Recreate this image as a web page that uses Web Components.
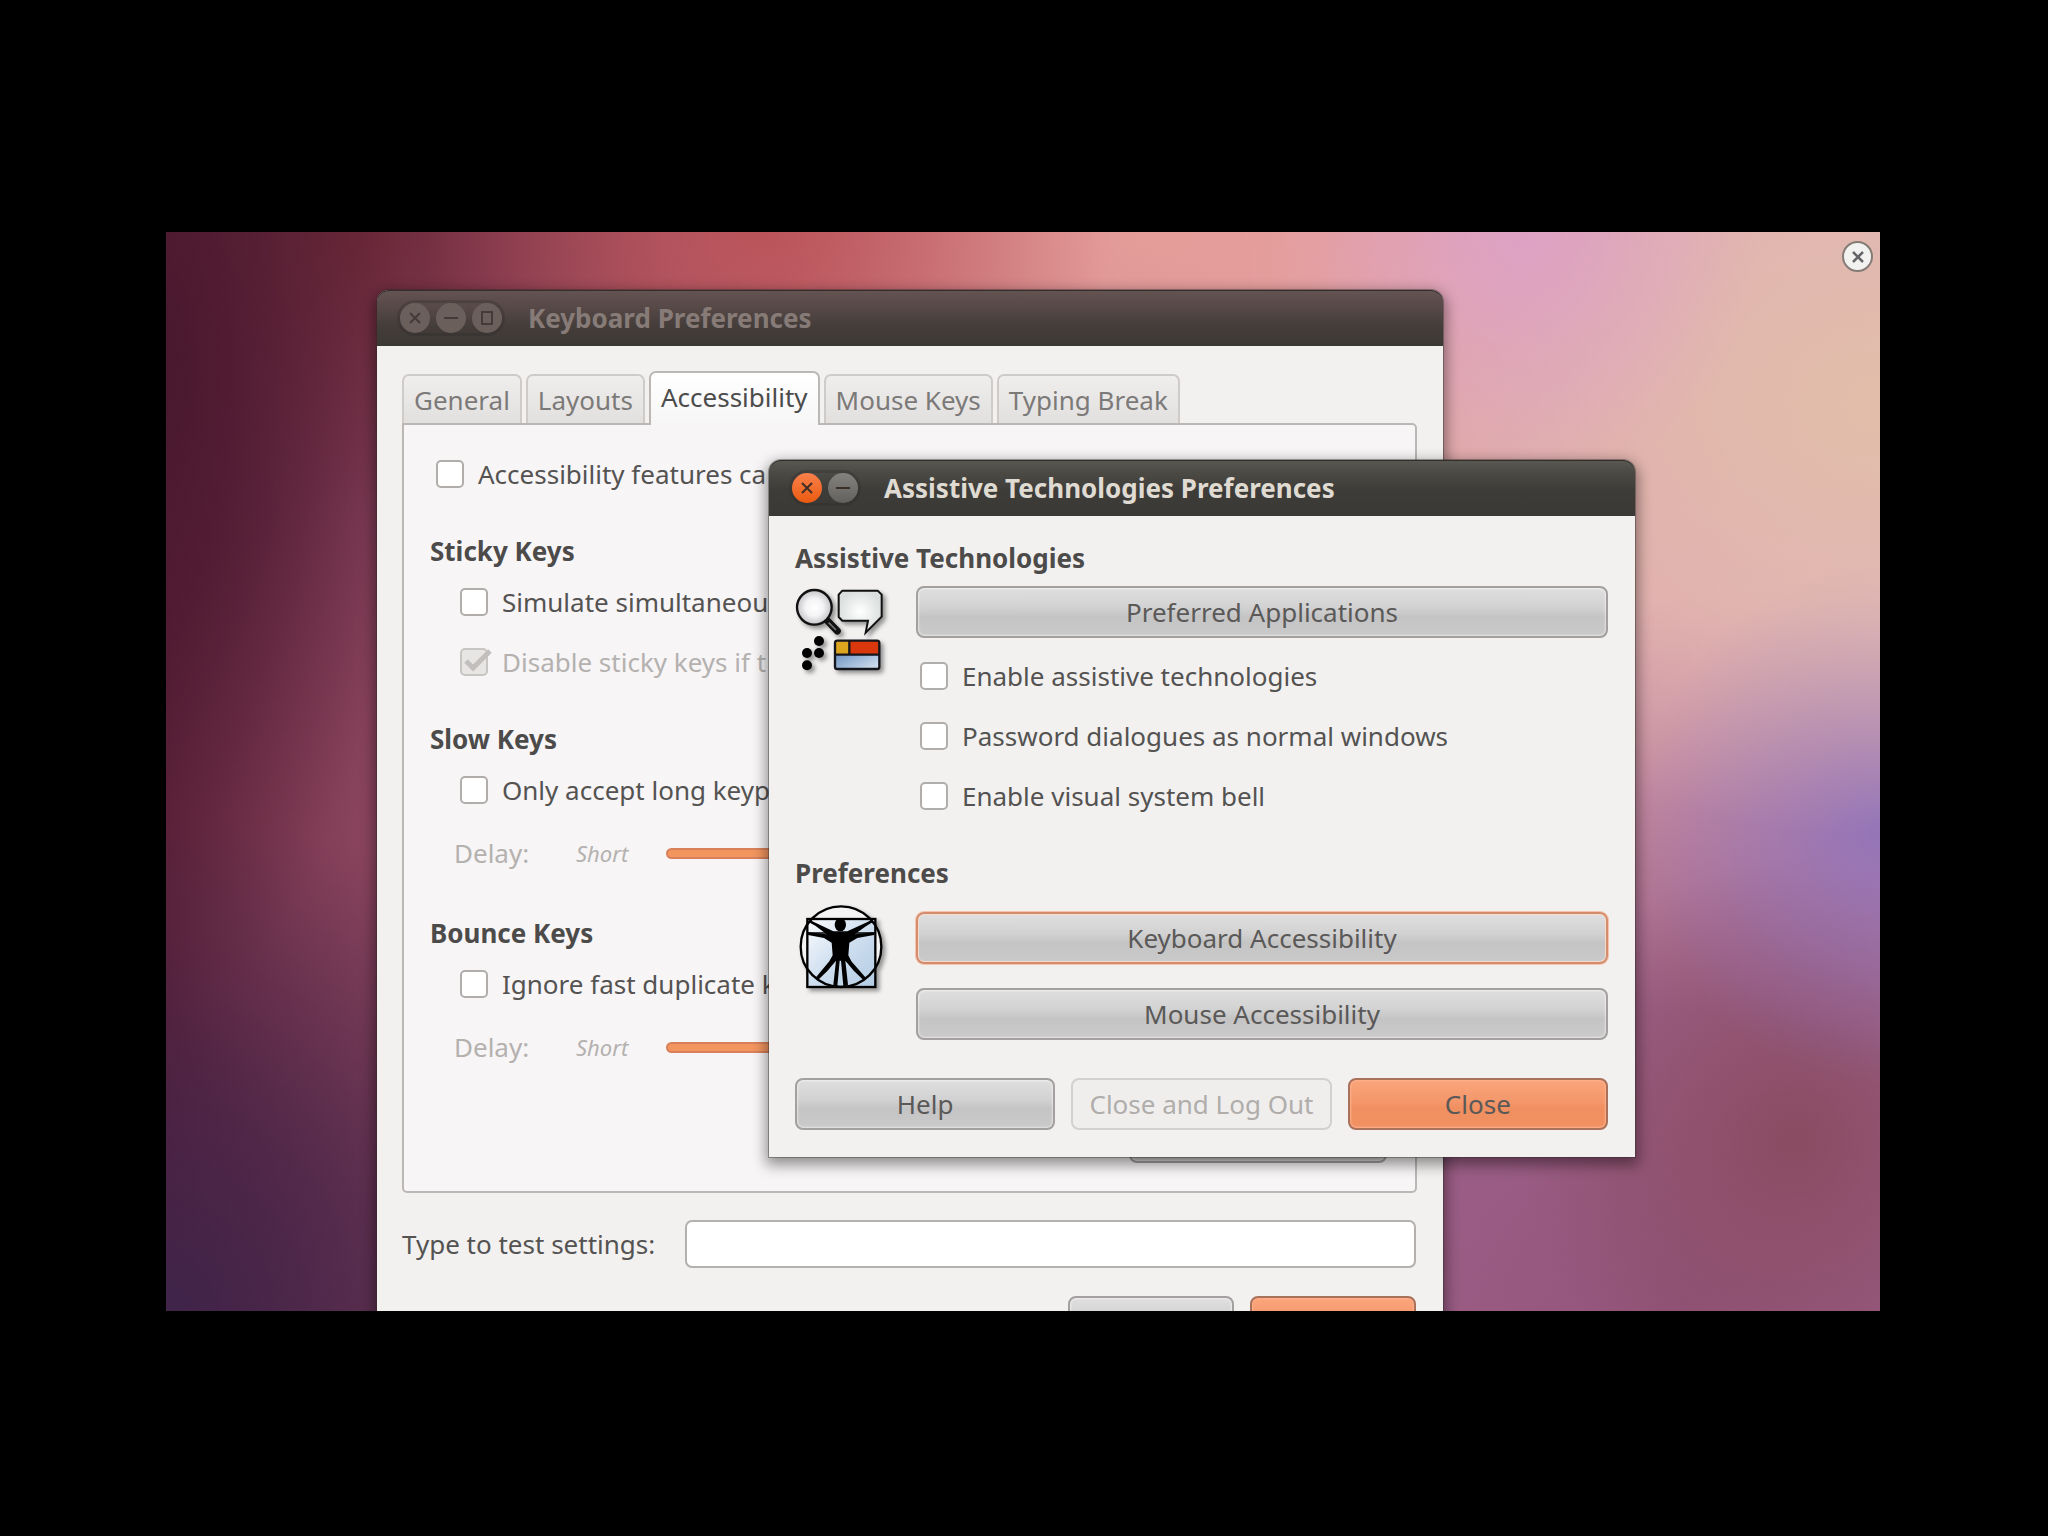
<!DOCTYPE html>
<html lang="en-GB">
<head>
<meta charset="utf-8">
<title>Assistive Technologies Preferences</title>
<style>
  html { height: 100%; background: #000; }
  body {
    margin: 0; min-height: 100%; box-sizing: border-box; display: grid;
    padding: 232px 168px 225px 166px; background: #000; color: #545352;
    font-family: "Noto Sans", "Open Sans", sans-serif; font-size: 26px; line-height: 34px;
  }
  .keyboard { left: 211px; top: 58px; width: 1066px; --side: 25px; }
  .assistive { left: 603px; top: 228px; width: 866px; }
  .push { margin-top: 31px; display: flex; justify-content: flex-end; padding-right: 28px; }
  .push ambiance-button { width: 258px; }
  .test { margin: 27px 1px 28px 0; }
  .end { display: flex; justify-content: flex-end; gap: 16px; margin-right: 1px; }
  .end ambiance-button { width: 166px; }
  .checks { margin: 8px 4px 0; }
  .stack { display: grid; gap: 24px; padding-top: 10px; }
  .footer { display: grid; grid-template-columns: repeat(3, 1fr); gap: 16px; padding-top: 38px; }
</style>
</head>
<body>
<ubuntu-desktop>
  <ambiance-window class="keyboard" heading="Keyboard Preferences" controls="close minimise maximise">
    <tab-book tabs="General,Layouts,Accessibility,Mouse Keys,Typing Break" selected="2">
      <check-option label="Accessibility features ca"></check-option>
      <key-group heading="Sticky Keys">
        <check-option label="Simulate simultaneou"></check-option>
        <check-option label="Disable sticky keys if t" checked disabled></check-option>
      </key-group>
      <key-group heading="Slow Keys">
        <check-option label="Only accept long keyp"></check-option>
        <delay-slider slot="delay"></delay-slider>
      </key-group>
      <key-group heading="Bounce Keys">
        <check-option label="Ignore fast duplicate k"></check-option>
        <delay-slider slot="delay"></delay-slider>
      </key-group>
      <div class="push"><ambiance-button></ambiance-button></div>
    </tab-book>
    <div class="test"><text-entry label="Type to test settings:"></text-entry></div>
    <div class="end"><ambiance-button>Help</ambiance-button><ambiance-button kind="primary">Close</ambiance-button></div>
  </ambiance-window>

  <ambiance-window class="assistive" heading="Assistive Technologies Preferences" controls="close minimise" active>
    <icon-section heading="Assistive Technologies">
      <assistive-icon slot="icon"></assistive-icon>
      <ambiance-button>Preferred Applications</ambiance-button>
      <div class="checks">
        <check-option label="Enable assistive technologies"></check-option>
        <check-option label="Password dialogues as normal windows"></check-option>
        <check-option label="Enable visual system bell"></check-option>
      </div>
    </icon-section>
    <icon-section heading="Preferences" spaced>
      <access-icon slot="icon"></access-icon>
      <div class="stack">
        <ambiance-button kind="focused">Keyboard Accessibility</ambiance-button>
        <ambiance-button>Mouse Accessibility</ambiance-button>
      </div>
    </icon-section>
    <div class="footer">
      <ambiance-button>Help</ambiance-button>
      <ambiance-button kind="off">Close and Log Out</ambiance-button>
      <ambiance-button kind="primary">Close</ambiance-button>
    </div>
  </ambiance-window>
</ubuntu-desktop>

<script>
const define = (name, render) => customElements.define(name, class extends HTMLElement {
  connectedCallback() {
    if (this.shadowRoot) return;
    this.attachShadow({ mode: 'open' }).innerHTML = render(this);
  }
});

define('ubuntu-desktop', () => `
  <style>
    :host {
      display: block; position: relative; overflow: hidden;
      background:
        radial-gradient(ellipse 20% 24% at 35% 0%, rgba(186,80,86,.85), transparent),
        radial-gradient(ellipse 14% 60% at 0% 12%, rgba(72,24,46,.95), transparent),
        radial-gradient(ellipse 18% 26% at 11% 0%, rgba(104,36,50,.8), transparent),
        radial-gradient(ellipse 30% 46% at 0% 100%, rgba(64,36,74,1), transparent),
        radial-gradient(ellipse 16% 34% at 14% 56%, rgba(146,74,98,.7), transparent),
        radial-gradient(ellipse 14% 24% at 79% 0%, rgba(220,158,204,.8), transparent),
        radial-gradient(ellipse 34% 40% at 100% 16%, rgba(226,190,168,.95), transparent),
        radial-gradient(ellipse 14% 24% at 100% 55%, rgba(140,112,188,.85), transparent),
        radial-gradient(ellipse 16% 26% at 95% 84%, rgba(136,74,94,.9), transparent),
        radial-gradient(ellipse 50% 66% at 88% 100%, rgba(146,84,122,1) 0%, rgba(154,92,134,.95) 42%, transparent),
        radial-gradient(ellipse 30% 30% at 58% 0%, rgba(230,158,154,.95), transparent),
        linear-gradient(90deg, #5c2038 0%, #84405a 14%, #b8606c 38%, #e0a0a4 66%, #e0b0bc 100%);
    }
    ::slotted(*) { position: absolute; }
    button {
      position: absolute; top: 9px; right: 7px; width: 31px; height: 31px; padding: 0;
      border: 2px solid #857c76; border-radius: 50%; background: #f2f2f0; display: grid; place-items: center;
    }
  </style>
  <slot></slot>
  <button aria-label="Dismiss"><svg width="14" height="14" viewBox="0 0 14 14"><path d="M2 2 12 12M12 2 2 12" stroke="#66666a" stroke-width="2.500"/></svg></button>`);

const glyphs = {
  close: '<path d="M10 10 20 20M20 10 10 20"/>',
  minimise: '<path d="M8 15H22"/>',
  maximise: '<path d="M10 9H20V21H10Z"/>'
};

define('ambiance-window', el => {
  const active = el.hasAttribute('active');
  return `
  <style>
    :host {
      display: flow-root; border-radius: 12px 12px 0 0; box-sizing: border-box;
      box-shadow: 0 0 0 1px rgba(50,46,42,.4), 0 5px 14px 3px rgba(0,0,0,.42);
      background: #f2f1f0;
    }
    header {
      height: 56px; box-sizing: border-box; border-radius: 12px 12px 0 0; padding: 0 23px;
      display: flex; align-items: center; gap: 26px;
      background: ${active ? 'linear-gradient(#5a5853 0%, #4b4a45 22%, #3e3c38 55%, #3b3935 100%)' : 'linear-gradient(#645453 0%, #574947 30%, #443d3a 65%, #3c3935 100%)'};
      box-shadow: inset 0 1px 0 rgba(40,38,34,.8);
    }
    .controls { display: flex; gap: 6px; border-radius: 16px; box-shadow: 0 0 0 3px rgba(40,36,34,.25); }
    .controls button {
      width: 30px; height: 30px; padding: 0; border: 0; border-radius: 50%;
      background: ${active ? 'linear-gradient(#83827e, #62615d)' : '#6b5f5c'};
    }
    .controls .close { background: ${active ? 'linear-gradient(#f9814b, #ea5a10)' : '#6b5f5c'}; }
    svg { display: block; fill: none; stroke: ${active ? '#3c2f28' : '#443a38'}; stroke-width: 2; }
    h1 { margin: 0; font-size: 26px; line-height: 34px; font-weight: 700; color: ${active ? '#dfdbd2' : '#877b78'}; }
    main { padding: 25px 27px 27px var(--side, 26px); }
    :host(.keyboard) main { padding-right: 26px; }
  </style>
  <header>
    <div class="controls">${el.getAttribute('controls').split(' ').map(c =>
      `<button class="${c}" aria-label="${c}"><svg viewBox="0 0 30 30">${glyphs[c]}</svg></button>`).join('')}</div>
    <h1>${el.getAttribute('heading')}</h1>
  </header>
  <main><slot></slot></main>`;
});

define('tab-book', el => `
  <style>
    :host { display: block; }
    .tabs { display: flex; align-items: flex-end; gap: 4px; height: 52px; }
    button {
      font: inherit; color: #7c7a78; height: 49px; padding: 0 10px; border: 2px solid #cfcbc8; border-bottom: 0;
      border-radius: 7px 7px 0 0; background: linear-gradient(#f0eeed, #e2e0df); white-space: nowrap;
    }
    button[aria-selected=true] {
      height: 54px; margin-bottom: -2px; padding-bottom: 4px; color: #4c4c4c; border-color: #bbb7b5;
      background: linear-gradient(#fff, #f7f6f7); z-index: 1;
    }
    section { border: 2px solid #bbb7b5; border-radius: 0 5px 5px 5px; background: #f7f5f6; padding: 19px 0 23px 32px; }
  </style>
  <div class="tabs" role="tablist">${el.getAttribute('tabs').split(',').map((t, i) =>
    `<button role="tab" aria-selected="${i == el.getAttribute('selected')}">${t}</button>`).join('')}</div>
  <section role="tabpanel"><slot></slot></section>`);

define('key-group', el => `
  <style>
    :host { display: block; margin: 30px 0 0 -6px; }
    h2 { margin: 0 0 4px; font-size: 26px; line-height: 34px; font-weight: 700; color: #4c4b4a; }
    div { padding-left: 30px; }
    footer { padding-left: 24px; }
  </style>
  <h2>${el.getAttribute('heading')}</h2><div><slot></slot></div><footer><slot name="delay"></slot></footer>`);

define('check-option', el => `
  <style>
    :host { display: block; }
    label { display: flex; align-items: center; gap: 14px; height: 60px; white-space: nowrap; }
    label.off { color: #b4b1af; }
    span { position: relative; display: grid; width: 28px; height: 28px; }
    input {
      appearance: none; margin: 0; width: 28px; height: 28px; box-sizing: border-box;
      border: 2px solid #b1adab; border-radius: 5px; background: #fff;
    }
    input:disabled { border-color: #c8c5c3; background: #e8e6e5; }
    svg { position: absolute; left: 4px; top: 1px; fill: none; stroke: #c2bfbd; stroke-width: 5; }
  </style>
  <label class="${el.hasAttribute('disabled') ? 'off' : ''}"><span><input type="checkbox" ${el.hasAttribute('checked') ? 'checked' : ''} ${el.hasAttribute('disabled') ? 'disabled' : ''}>${
    el.hasAttribute('checked') ? '<svg width="28" height="24" viewBox="0 0 28 24"><path d="M2 12 9 19 26 2"/></svg>' : ''}</span>${el.getAttribute('label')}</label>`);

define('delay-slider', () => `
  <style>
    :host { display: block; }
    label { display: flex; align-items: center; height: 66px; color: #b4b1af; }
    span { width: 122px; }
    em { width: 90px; font-size: 22px; }
    input { appearance: none; margin: 0; width: 420px; height: 11px; box-sizing: border-box; border: 2px solid #d9805a; border-radius: 6px; background: #f2955f; }
    input::-webkit-slider-thumb { appearance: none; width: 1px; height: 1px; }
  </style>
  <label><span>Delay:</span><em>Short</em><input type="range" disabled></label>`);

define('ambiance-button', el => `
  <style>
    :host { display: block; }
    button {
      width: 100%; height: 52px; box-sizing: border-box; padding: 0; font: inherit; color: #5a5958; white-space: nowrap;
      border: 2px solid #a3a09f; border-radius: 8px;
      background: linear-gradient(#e0dfdf 0%, #d3d2d2 40%, #c5c4c4 60%, #cbcaca 100%);
      box-shadow: inset 0 0 2px 1px rgba(255,255,255,.5);
    }
    .focused { border-color: #d58c6c; box-shadow: 0 0 0 1px #f5c4ac, inset 0 0 0 1px #f6dccd; }
    .primary { border-color: #a9715a; background: linear-gradient(#fba57c 0%, #f4976b 45%, #f08f5f 60%, #f19163 100%); box-shadow: inset 0 0 2px 1px #ffb18c; }
    .off { border-color: #d3d1d0; color: #b0adab; background: #efeeed; box-shadow: none; }
  </style>
  <button class="${el.getAttribute('kind') || ''}" ${el.getAttribute('kind') === 'off' ? 'disabled' : ''}><slot></slot></button>`);

define('text-entry', el => `
  <style>
    :host { display: block; }
    label { display: flex; align-items: center; gap: 30px; white-space: nowrap; }
    input { flex: 1; height: 48px; min-width: 0; box-sizing: border-box; border: 2px solid #b3b0ae; border-radius: 7px; background: #fff; font: inherit; padding: 0 10px; }
  </style>
  <label>${el.getAttribute('label')}<input type="text"></label>`);

define('icon-section', el => `
  <style>
    :host { display: block; }
    :host([spaced]) { margin-top: 30px; }
    h2 { margin: 0; padding-bottom: 11px; font-size: 26px; line-height: 34px; font-weight: 700; color: #4c4b4a; }
    :host([spaced]) h2 { padding-bottom: 12px; }
    div { display: grid; grid-template-columns: 90px 1fr; column-gap: 31px; align-items: start; }
  </style>
  <h2>${el.getAttribute('heading')}</h2>
  <div><slot name="icon"></slot><section><slot></slot></section></div>`);

define('assistive-icon', () => `
  <style>:host, svg { display: block; } svg { filter: drop-shadow(3px 3px 2px rgba(0,0,0,.4)); }</style>
  <svg width="90" height="90" viewBox="45 48 270 270">
    <defs>
      <radialGradient id="lens"><stop offset="0" stop-color="#fff"/><stop offset=".5" stop-color="#f4f4f6"/><stop offset="1" stop-color="#c4c4c8"/></radialGradient>
      <radialGradient id="talk"><stop offset="0" stop-color="#fff"/><stop offset="1" stop-color="#dbe0df"/></radialGradient>
      <linearGradient id="blue" x2="1" y2=".6"><stop offset="0" stop-color="#6f95c4"/><stop offset="1" stop-color="#c9d9ea"/></linearGradient>
    </defs>
    <path d="M142 152 172 183" stroke="#111" stroke-width="21" stroke-linecap="round"/>
    <path d="M146 158 168 180" stroke="#777" stroke-width="5"/>
    <circle cx="103" cy="112" r="52" fill="url(#lens)" stroke="#111" stroke-width="7"/>
    <path d="M187 62H293L305 74V140L257 188 264 152H187L176 141V74Z" fill="url(#talk)" stroke="#111" stroke-width="6"/>
    <g fill="#000"><circle cx="117" cy="213" r="15"/><circle cx="81" cy="249" r="15"/><circle cx="117" cy="249" r="15"/><circle cx="81" cy="286" r="15"/></g>
    <rect x="164" y="211" width="44" height="43" fill="#dba520"/>
    <rect x="208" y="211" width="90" height="43" fill="#d8380c"/>
    <rect x="164" y="254" width="134" height="43" fill="url(#blue)"/>
    <g fill="none" stroke="#15151c" stroke-width="7"><rect x="165" y="212" width="133" height="85" rx="7"/><path d="M208 212V254M165 254H298"/></g>
  </svg>`);

define('access-icon', () => `
  <style>:host, svg { display: block; } svg { filter: drop-shadow(3px 3px 2px rgba(0,0,0,.4)); }</style>
  <svg width="90" height="90" viewBox="45 36 270 270">
    <defs><linearGradient id="sky" x2="1" y2="1"><stop offset="0" stop-color="#fbfcfe"/><stop offset=".5" stop-color="#cfdff0"/><stop offset="1" stop-color="#b2cbe2"/></linearGradient></defs>
    <circle cx="183" cy="170" r="121" fill="#f4f4f4"/>
    <rect x="82" y="87" width="204" height="204" fill="url(#sky)"/>
    <g fill="none" stroke="#000" stroke-width="7"><circle cx="183" cy="170" r="121"/><rect x="82" y="87" width="204" height="204"/><path d="M82 129H286" stroke-width="5"/></g>
    <ellipse cx="181" cy="104" rx="17" ry="20"/>
    <path d="M88 89 108 99 160 124H202L256 99 276 89 280 95 260 107 224 133 282 127V135L232 144 208 158 205 196 214 214 256 262 250 270 222 243 196 212 204 284 196 288H190L183 212H179L172 288H164L160 284 168 212 142 243 114 270 108 262 148 214 158 196 155 158 132 144 84 135V127L140 133 106 107 84 95Z"/>
  </svg>`);
</script>
</body>
</html>
